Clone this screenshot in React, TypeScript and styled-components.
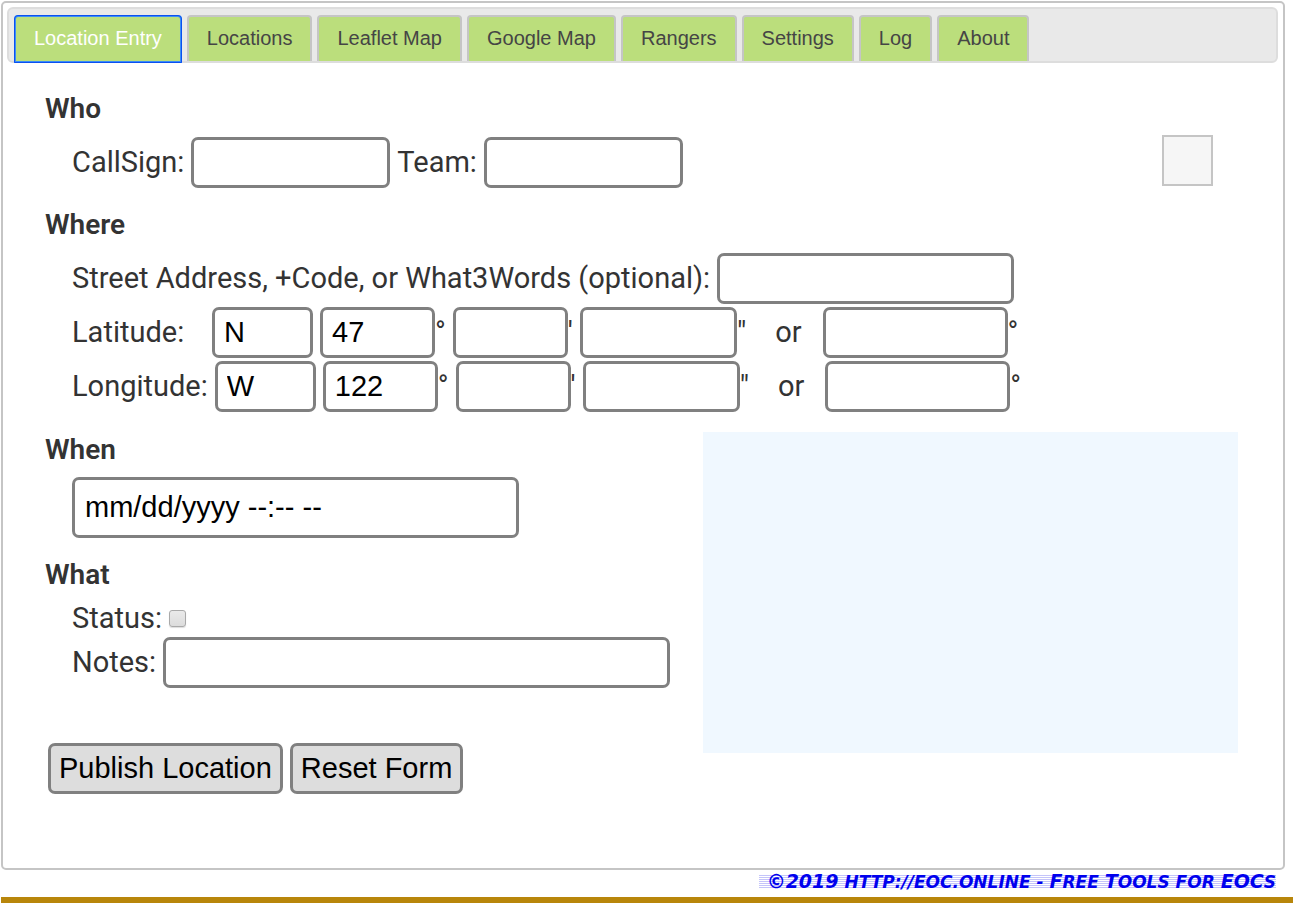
import React, { useState } from "react";
import styled, { createGlobalStyle } from "styled-components";

const GlobalStyle = createGlobalStyle`
  *, *::before, *::after { box-sizing: border-box; }
  body {
    margin: 0;
    background: #fff;
    color: #333;
    font-family: Roboto, "Liberation Sans", sans-serif;
    font-size: 29px;
    line-height: 34px;
  }
`;

const Panel = styled.main`
  margin: 1px 8px 0 1px;
  padding: 4px;
  border: 2px solid #c5c5c5;
  border-radius: 5px;
`;

const TabBar = styled.nav`
  display: flex;
  gap: 5px;
  height: 56px;
  margin-right: 1px;
  padding: 6px 5px 0;
  background: #e9e9e9;
  border: 2px solid #ddd;
  border-radius: 6px;
`;

const Tab = styled.button<{ $active: boolean }>`
  height: ${(p) => (p.$active ? 48 : 46)}px;
  padding: 0 18px 2px;
  border: 2px solid ${(p) => (p.$active ? "#3b8df5" : "#c5c5c5")};
  border-bottom-width: ${(p) => (p.$active ? 2 : 0)}px;
  border-radius: 4px 4px 0 0;
  outline: ${(p) => (p.$active ? "1px solid #0a50f0" : "none")};
  outline-offset: -1px;
  background: #bbde7c;
  color: ${(p) => (p.$active ? "#fff" : "#454545")};
  font-family: "Liberation Sans", Arial, sans-serif;
  font-size: 20px;
  line-height: 24px;
  white-space: nowrap;
`;

const Form = styled.form`
  padding: 28px 41px 70px 38px;
`;

const Section = styled.section`
  margin-bottom: 18px;
`;

const Heading = styled.h2`
  margin: 0 0 8px;
  font-size: 28px;
  font-weight: 600;
  line-height: 36px;
`;

const Row = styled.div`
  display: flex;
  align-items: center;
  gap: 7px;
  min-height: 54px;
  padding-left: 27px;
  white-space: nowrap;
`;

const DateRow = styled(Row)`
  min-height: 63px;
`;

const StatusRow = styled(Row)`
  min-height: 32px;
`;

const CoordLabel = styled.label`
  min-width: 133px;
`;

const Field = styled.input<{ $w: number }>`
  width: ${(p) => p.$w}px;
  height: 51px;
  padding: 0 9px;
  border: 3px solid #808080;
  border-radius: 7px;
  background: #fff;
  color: #000;
  font-family: "Liberation Sans", Arial, sans-serif;
  font-size: 29px;
`;

const DateField = styled(Field)`
  height: 61px;
  padding: 0 10px;
  &::placeholder { color: #000; opacity: 1; }
`;

const WithUnit = styled.span`
  display: flex;
  align-items: center;
`;

const Or = styled.span`
  padding: 0 14px 0 22px;
`;

const Swatch = styled.div`
  align-self: flex-start;
  width: 51px;
  height: 51px;
  margin: 0 25px 0 auto;
  border: 2px solid #c5c5c5;
  background: #f6f6f6;
`;

const Lower = styled.div`
  display: flex;
  justify-content: space-between;
  align-items: flex-start;
  padding-top: 1px;
`;

const MapArea = styled.aside`
  width: 535px;
  height: 321px;
  background: #f0f8ff;
`;

const Checkbox = styled.input`
  appearance: none;
  width: 17px;
  height: 17px;
  margin: 0;
  border: 1px solid #a9a9a9;
  border-radius: 3px;
  background: linear-gradient(#eaeaea, #dcdcdc);
  box-shadow: 0 1px 1px #ddd;
  &:checked { background: #808080; }
`;

const Actions = styled.div`
  display: flex;
  gap: 7px;
  padding: 36px 0 0 3px;
`;

const ActionButton = styled.button`
  height: 51px;
  padding: 0 8px 2px;
  border: 3px solid #808080;
  border-radius: 7px;
  background: #ddd;
  color: #000;
  font-family: "Liberation Sans", Arial, sans-serif;
  font-size: 29px;
  line-height: 34px;
`;

const Footer = styled.footer`
  display: flex;
  justify-content: flex-end;
  align-items: center;
  height: 33px;
  margin-left: 1px;
  padding: 0 17px 4px 0;
  border-bottom: 6px solid #b8860b;
`;

const Credit = styled.a`
  padding-left: 8px;
  background: repeating-linear-gradient(#fff 0 1px, #c4c4fa 1px 2px);
  color: #0000ee;
  font-family: "DejaVu Sans", sans-serif;
  font-size: 17px;
  font-style: italic;
  font-weight: 700;
  line-height: 14px;
  text-decoration: none;
  text-transform: uppercase;
  white-space: nowrap;
`;

const Cap = styled.span`
  font-size: 19px;
`;

const tabs = ["Location Entry", "Locations", "Leaflet Map", "Google Map", "Rangers", "Settings", "Log", "About"];

function Coordinates({ name, hemisphere, degrees }: { name: string; hemisphere: string; degrees: string }) {
  const id = name.toLowerCase();
  return (
    <Row>
      <CoordLabel htmlFor={id}>{name}:</CoordLabel>
      <Field id={id} $w={101} defaultValue={hemisphere} />
      <WithUnit><Field $w={115} defaultValue={degrees} aria-label={`${name} degrees`} />°</WithUnit>
      <WithUnit><Field $w={115} aria-label={`${name} minutes`} />'</WithUnit>
      <WithUnit><Field $w={157} aria-label={`${name} seconds`} />"</WithUnit>
      <Or>or</Or>
      <WithUnit><Field $w={185} aria-label={`${name} decimal degrees`} />°</WithUnit>
    </Row>
  );
}

export default function App() {
  const [active, setActive] = useState(tabs[0]);
  return (
    <>
      <GlobalStyle />
      <Panel>
        <TabBar>
          {tabs.map((t) => (
            <Tab key={t} type="button" $active={t === active} onClick={() => setActive(t)}>{t}</Tab>
          ))}
        </TabBar>
        <Form onSubmit={(e) => e.preventDefault()}>
          <Section>
            <Heading>Who</Heading>
            <Row>
              <label htmlFor="callsign">CallSign:</label>
              <Field id="callsign" $w={199} />
              <label htmlFor="team">Team:</label>
              <Field id="team" $w={199} />
              <Swatch />
            </Row>
          </Section>
          <Section>
            <Heading>Where</Heading>
            <Row>
              <label htmlFor="address">Street Address, +Code, or What3Words (optional):</label>
              <Field id="address" $w={297} />
            </Row>
            <Coordinates name="Latitude" hemisphere="N" degrees="47" />
            <Coordinates name="Longitude" hemisphere="W" degrees="122" />
          </Section>
          <Lower>
            <div>
              <Section>
                <Heading>When</Heading>
                <DateRow>
                  <DateField $w={447} placeholder="mm/dd/yyyy --:-- --" aria-label="Date and time" />
                </DateRow>
              </Section>
              <Section>
                <Heading>What</Heading>
                <StatusRow>
                  <label htmlFor="status">Status:</label>
                  <Checkbox id="status" type="checkbox" />
                </StatusRow>
                <Row>
                  <label htmlFor="notes">Notes:</label>
                  <Field id="notes" $w={507} />
                </Row>
              </Section>
              <Actions>
                <ActionButton type="submit">Publish Location</ActionButton>
                <ActionButton type="reset">Reset Form</ActionButton>
              </Actions>
            </div>
            <MapArea />
          </Lower>
        </Form>
      </Panel>
      <Footer>
        <Credit href="http://eoc.online">
          <Cap>©2019</Cap> http://eoc.online - <Cap>F</Cap>ree <Cap>T</Cap>ools for <Cap>EOC</Cap>s
        </Credit>
      </Footer>
    </>
  );
}
